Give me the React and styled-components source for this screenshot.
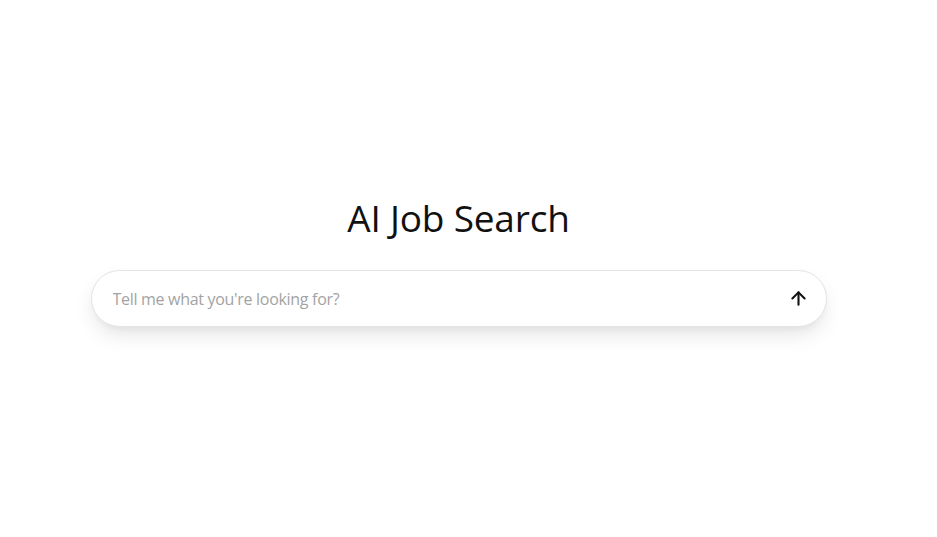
import styled, { createGlobalStyle } from "styled-components";
import { ArrowUp } from "lucide-react";

const Global = createGlobalStyle`
  body {
    margin: 0;
    background: #ffffff;
    font-family: "Open Sans", "Noto Sans", sans-serif;
  }
`;

const Page = styled.div`
  min-height: 537px;
  padding-right: 20px;
  display: flex;
  flex-direction: column;
  align-items: center;
  justify-content: center;
  box-sizing: border-box;
  padding-bottom: 14px;
`;

const Wrap = styled.div`
  width: 100%;
  max-width: 768px;
  padding: 0 16px;
  box-sizing: border-box;
  display: flex;
  flex-direction: column;
  align-items: center;
  gap: 30px;
`;

const Title = styled.h1`
  margin: 0;
  font-size: 37px;
  font-weight: 400;
  color: #111;
  letter-spacing: -0.2px;
  line-height: 44px;
`;

const Bar = styled.form`
  width: 100%;
  height: 57px;
  box-sizing: border-box;
  border: 1px solid #e4e4e4;
  border-radius: 999px;
  background: #fff;
  box-shadow: 0 10px 22px -4px rgba(0, 0, 0, 0.12), 0 4px 8px -4px rgba(0, 0, 0, 0.06);
  display: flex;
  align-items: center;
  padding: 0 15px 0 19px;
`;

const Input = styled.input`
  flex: 1;
  border: none;
  outline: none;
  background: transparent;
  font-family: inherit;
  font-size: 16px;
  letter-spacing: -0.3px;
  color: #222;
  &::placeholder {
    color: #a3a3a3;
  }
`;

const Send = styled.button`
  width: 24px;
  height: 24px;
  border: none;
  background: transparent;
  padding: 0;
  display: flex;
  align-items: center;
  justify-content: center;
  color: #111;
  cursor: pointer;
`;

export default function App() {
  return (
    <>
      <Global />
      <Page>
        <Wrap>
          <Title>AI Job Search</Title>
          <Bar onSubmit={(e) => e.preventDefault()}>
            <Input placeholder="Tell me what you're looking for?" />
            <Send type="submit">
              <ArrowUp size={21} strokeWidth={2.4} />
            </Send>
          </Bar>
        </Wrap>
      </Page>
    </>
  );
}
